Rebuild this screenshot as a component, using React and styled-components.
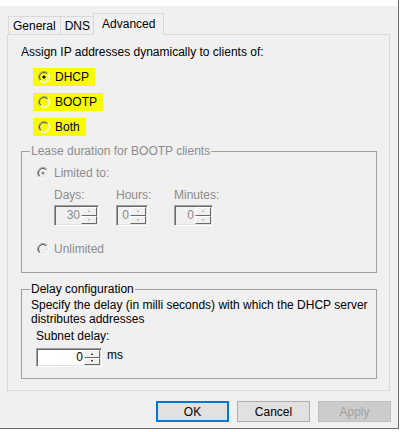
import React from 'react'
import styled, { createGlobalStyle } from 'styled-components'

const GlobalStyle = createGlobalStyle`
  body {
    margin: 0;
    background: #ffffff;
    font-family: "Liberation Sans", Arial, sans-serif;
    font-size: 12px;
    color: #000;
  }
`

const Window = styled.div`
  width: 398px;
  height: 428px;
  border-right: 1px solid #6b6b6b;
  border-bottom: 1px solid #6b6b6b;
  background: #f0f0f0;
  display: flex;
  flex-direction: column;
`

const TitleEdge = styled.div`
  height: 6px;
  background: #ffffff;
`

const TabStrip = styled.div`
  display: flex;
  align-items: flex-end;
  padding-left: 8px;
  margin-top: 7px;
  position: relative;
  z-index: 1;
`

const Tab = styled.div`
  height: ${p => (p.$active ? '21px' : '16px')};
  padding: 0 ${p => (p.$active ? '8px' : '4px')};
  border: 1px solid #d9d9d9;
  border-bottom: none;
  margin-left: ${p => (p.$active ? '-1px' : '0')};
  margin-right: ${p => (p.$active ? '0' : '-1px')};
  margin-bottom: ${p => (p.$active ? '-1px' : '0')};
  background: #f0f0f0;
  display: flex;
  align-items: center;
  line-height: 15px;
  padding-top: ${p => (p.$active ? '0' : '1px')};
  box-sizing: content-box;
`

const Panel = styled.div`
  margin-left: 7px;
  border: 1px solid #d9d9d9;
  padding: 10px 0 0 13px;
  box-sizing: border-box;
  width: 383px;
  height: 357px;
  display: flex;
  flex-direction: column;
`

const Text = styled.div`
  line-height: 15px;
  color: ${p => (p.$disabled ? '#8c8c8c' : '#000')};
  margin-left: ${p => p.$indent || 0}px;
  margin-top: ${p => p.$top || 0}px;
`

const RadioList = styled.div`
  display: flex;
  flex-direction: column;
  gap: 7px;
  margin: ${p => p.$top}px 0 0 ${p => p.$left}px;
  align-items: flex-start;
`

const Highlight = styled.label`
  display: flex;
  align-items: center;
  gap: 5px;
  height: 18px;
  padding: 0 6px 0 5px;
  background: ${p => (p.$marked ? '#fafa00' : 'transparent')};
  color: ${p => (p.$disabled ? '#8c8c8c' : '#000')};
  line-height: 15px;
`

const Group = styled.fieldset`
  margin: ${p => p.$top}px 0 0 0;
  width: 356px;
  height: ${p => p.$height}px;
  box-sizing: border-box;
  border: 1px solid #a0a0a0;
  padding: 0 0 0 ${p => p.$pad}px;
  min-width: 0;
`

const Legend = styled.legend`
  padding: 0 1px;
  margin-left: ${p => 8 - p.$pad}px;
  line-height: 15px;
  color: ${p => (p.$disabled ? '#8c8c8c' : '#000')};
`

const FieldRow = styled.div`
  display: grid;
  grid-template-columns: 62px 58px auto;
  margin: 6px 0 0 22px;
`

const FieldCol = styled.div`
  display: flex;
  flex-direction: column;
  align-items: flex-start;
  gap: 2px;
`

const SpinBox = styled.div`
  width: ${p => p.$width}px;
  height: ${p => p.$height}px;
  box-sizing: border-box;
  display: flex;
  align-items: stretch;
  background: ${p => (p.$disabled ? '#f0f0f0' : '#ffffff')};
  border-top: 1px solid #a0a0a0;
  border-left: 1px solid #a0a0a0;
  border-right: 1px solid #ffffff;
  border-bottom: 1px solid #ffffff;
  box-shadow: inset 1px 1px 0 #696969, inset -1px -1px 0 #e3e3e3;
  padding: 1px;
`

const SpinValue = styled.div`
  flex: 1;
  text-align: right;
  line-height: ${p => p.$height - 4}px;
  padding-right: 1px;
  color: ${p => (p.$disabled ? '#8c8c8c' : '#000')};
`

const SpinButtons = styled.div`
  width: 16px;
  display: flex;
  flex-direction: column;
`

const SpinButton = styled.div`
  flex: 1;
  background: #f0f0f0;
  border-top: 1px solid #ffffff;
  border-left: 1px solid #ffffff;
  border-right: 1px solid #696969;
  border-bottom: 1px solid #696969;
  box-sizing: border-box;
  display: flex;
  align-items: center;
  justify-content: center;
`

const Arrow = styled.span`
  width: 0;
  height: 0;
  border-left: 1.5px solid transparent;
  border-right: 1.5px solid transparent;
  ${p => (p.$up ? 'border-bottom' : 'border-top')}: 2px solid ${p => (p.$disabled ? '#a0a0a0' : '#000')};
`

const DelayRow = styled.div`
  display: flex;
  align-items: flex-start;
  gap: 5px;
  margin: 4px 0 0 5px;
`

const ButtonBar = styled.div`
  display: flex;
  gap: 8px;
  padding-left: 156px;
  margin-top: 10px;
`

const Button = styled.div`
  width: 73px;
  height: 21px;
  box-sizing: border-box;
  display: flex;
  align-items: center;
  justify-content: center;
  background: ${p => (p.$disabled ? '#cccccc' : '#e1e1e1')};
  border: ${p => (p.$default ? '2px solid #0078d7' : p.$disabled ? '1px solid #bfbfbf' : '1px solid #adadad')};
  color: ${p => (p.$disabled ? '#a0a0a0' : '#000')};
`

const RadioMark = ({ checked, disabled }) => (
  <svg width="12" height="12" viewBox="0 0 12 12">
    <defs>
      <linearGradient id="ringOuter" x1="0" y1="0" x2="1" y2="1">
        <stop offset="0.5" stopColor="#a0a0a0" />
        <stop offset="0.5" stopColor="#ffffff" />
      </linearGradient>
      <linearGradient id="ringInner" x1="0" y1="0" x2="1" y2="1">
        <stop offset="0.5" stopColor="#505050" />
        <stop offset="0.5" stopColor="#e3e3e3" />
      </linearGradient>
    </defs>
    <circle cx="6" cy="6" r="5.5" fill="none" stroke="url(#ringOuter)" strokeWidth="1" />
    <circle cx="6" cy="6" r="4.5" fill="none" stroke="url(#ringInner)" strokeWidth="1" />
    {checked && <circle cx="6" cy="6" r="1.6" fill={disabled ? '#8c8c8c' : '#000'} />}
  </svg>
)

const Radio = ({ label, checked, marked, disabled }) => (
  <Highlight $marked={marked} $disabled={disabled}>
    <RadioMark checked={checked} disabled={disabled} />
    {label}
  </Highlight>
)

const Spin = ({ value, width, height = 21, disabled }) => (
  <SpinBox $width={width} $height={height} $disabled={disabled}>
    <SpinValue $height={height} $disabled={disabled}>{value}</SpinValue>
    <SpinButtons>
      <SpinButton><Arrow $up $disabled={disabled} /></SpinButton>
      <SpinButton><Arrow $disabled={disabled} /></SpinButton>
    </SpinButtons>
  </SpinBox>
)

const App = () => {
  const lease = [
    { label: 'Days:', value: '30', width: 45 },
    { label: 'Hours:', value: '0', width: 32 },
    { label: 'Minutes:', value: '0', width: 39 },
  ]

  return (
    <>
      <GlobalStyle />
      <Window>
        <TitleEdge />
        <TabStrip>
          <Tab>General</Tab>
          <Tab>DNS</Tab>
          <Tab $active>Advanced</Tab>
        </TabStrip>
        <Panel>
          <Text>Assign IP addresses dynamically to clients of:</Text>
          <RadioList $top={8} $left={12}>
            <Radio label="DHCP" checked marked />
            <Radio label="BOOTP" marked />
            <Radio label="Both" marked />
          </RadioList>

          <Group $top={8} $height={129} $pad={10}>
            <Legend $pad={10} $disabled>Lease duration for BOOTP clients</Legend>
            <RadioList $top={5} $left={0}>
              <Radio label="Limited to:" checked disabled />
            </RadioList>
            <FieldRow>
              {lease.map(f => (
                <FieldCol key={f.label}>
                  <Text $disabled>{f.label}</Text>
                  <Spin value={f.value} width={f.width} disabled />
                </FieldCol>
              ))}
            </FieldRow>
            <RadioList $top={14} $left={0}>
              <Radio label="Unlimited" disabled />
            </RadioList>
          </Group>

          <Group $top={9} $height={97} $pad={9}>
            <Legend $pad={9}>Delay configuration</Legend>
            <Text $top={1} style={{ lineHeight: '14px' }}>
              Specify the delay (in milli seconds) with which the DHCP server
              <br />
              distributes addresses
            </Text>
            <Text $indent={5} $top={3}>Subnet delay:</Text>
            <DelayRow>
              <Spin value="0" width={66} height={19} />
              <Text>ms</Text>
            </DelayRow>
          </Group>
        </Panel>
        <ButtonBar>
          <Button $default>OK</Button>
          <Button>Cancel</Button>
          <Button $disabled>Apply</Button>
        </ButtonBar>
      </Window>
    </>
  )
}

export default App
